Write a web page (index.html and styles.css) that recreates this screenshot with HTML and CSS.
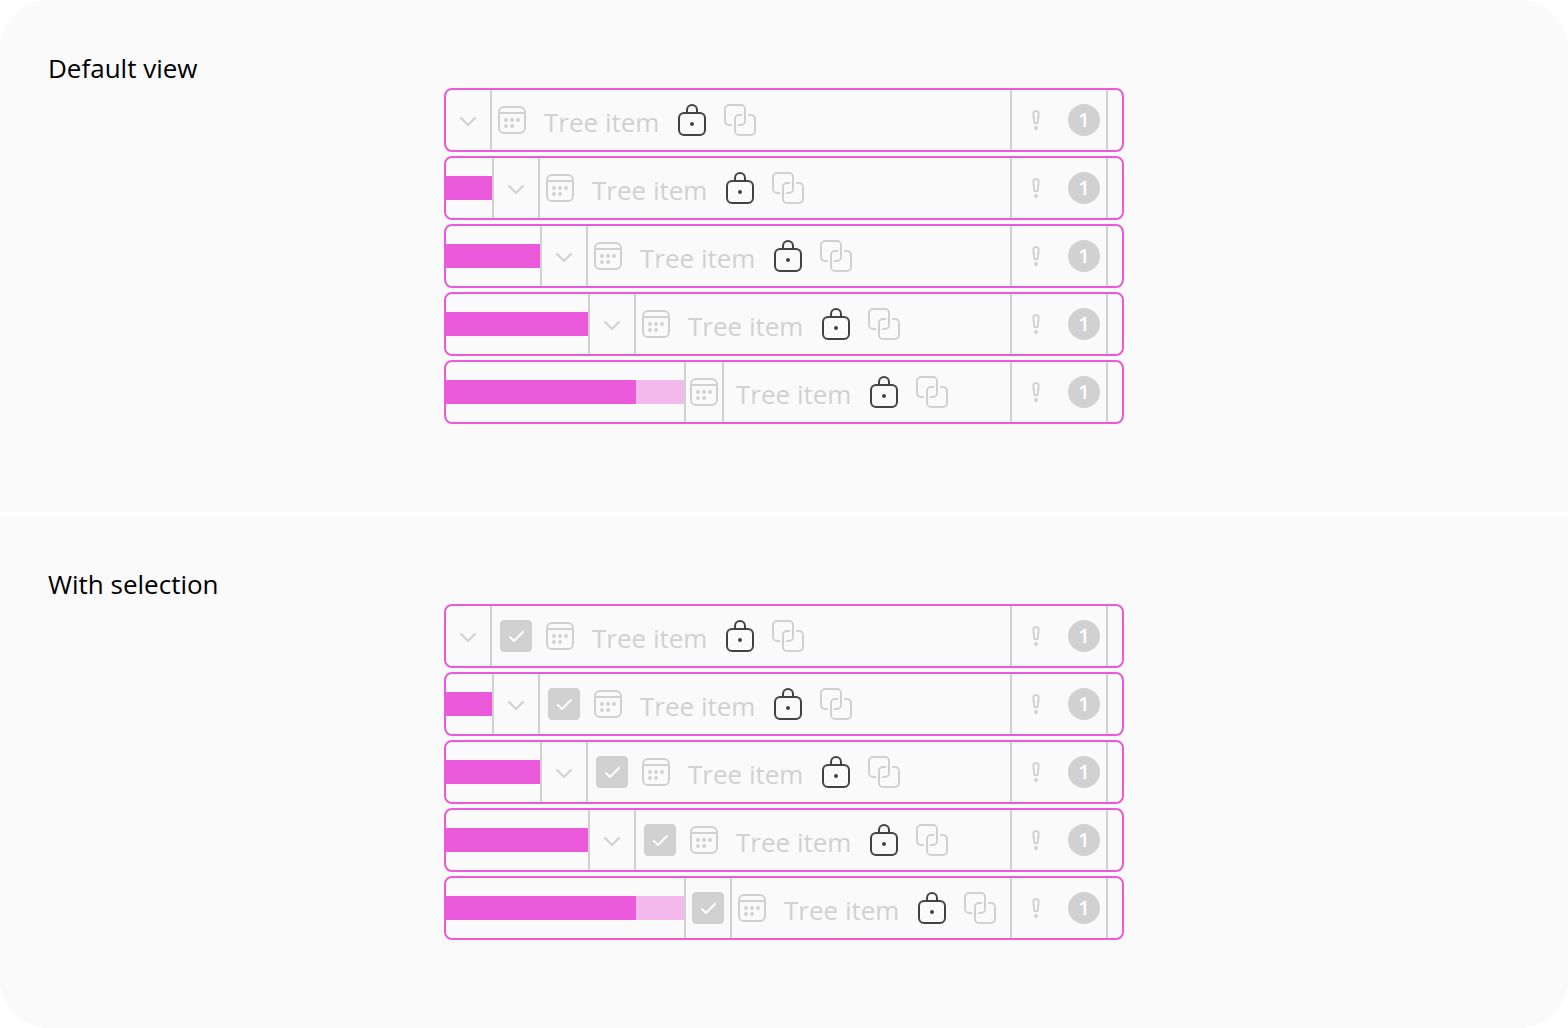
FILE: index.html
```html
<!DOCTYPE html>
<html lang="en">
<head>
<meta charset="utf-8">
<title>Tree item indentation</title>
<link rel="stylesheet" href="styles.css">
</head>
<body>
<svg class="sprite" aria-hidden="true">
  <symbol id="chevron" viewBox="0 0 32 32"><path d="M9 14l7 7 7-7"/></symbol>
  <symbol id="calendar" viewBox="0 0 32 32"><rect x="3" y="3" width="26" height="26" rx="5"/><path d="M3 9h26"/><g fill="currentColor" stroke="none"><circle cx="10" cy="16" r="2"/><circle cx="16" cy="16" r="2"/><circle cx="22" cy="16" r="2"/><circle cx="10" cy="22" r="2"/><circle cx="16" cy="22" r="2"/></g></symbol>
  <symbol id="lock" viewBox="0 0 32 32"><rect x="3" y="9" width="26" height="22" rx="5"/><path d="M11 9V6a5 5 0 0 1 10 0v3"/><circle cx="16" cy="20" r="2" fill="currentColor" stroke="none"/></symbol>
  <symbol id="linked" viewBox="0 0 32 32"><path d="M8 21H5a4 4 0 0 1-4-4V5a4 4 0 0 1 4-4h12a4 4 0 0 1 4 4v12a4 4 0 0 1-4 4h-3"/><path d="M18 11h-3a4 4 0 0 0-4 4v12a4 4 0 0 0 4 4h12a4 4 0 0 0 4-4V15a4 4 0 0 0-4-4h-3"/></symbol>
  <symbol id="important" viewBox="0 0 32 32"><path d="M16 7c-1.700 0-2.900 1.200-2.700 3l.9 7.800c.1 1 .8 1.700 1.800 1.700s1.700-.7 1.800-1.700l.9-7.800c.2-1.800-1-3-2.700-3z"/><circle cx="16" cy="24" r="2" fill="currentColor" stroke="none"/></symbol>
  <symbol id="check" viewBox="0 0 32 32"><path d="M10 17l4 4 9-9"/></symbol>
</svg>
<main class="page">
  <section class="panel">
    <h2 class="title">Default view</h2>
    <ul class="tree" id="default-tree"></ul>
  </section>
  <section class="panel">
    <h2 class="title">With selection</h2>
    <ul class="tree" id="selection-tree"></ul>
  </section>
</main>
<script src="tree.js"></script>
</body>
</html>
```
FILE: styles.css
```css
* {
  box-sizing: border-box;
}

body {
  margin: 0;
  background: #fff;
  color: #000;
  font-family: "Open Sans", "Noto Sans", sans-serif;
}

.sprite {
  display: none;
}

.page {
  display: grid;
  gap: 4px;
  border-radius: 48px;
  overflow: hidden;
}

.panel {
  padding: 48px 48px 88px;
  background: #fafafa;
}

.title {
  margin: 0;
  font-size: 26px;
  font-weight: 400;
  line-height: 40px;
}

.tree {
  display: grid;
  gap: 4px;
  max-width: 680px;
  margin: 0 auto;
  padding: 0;
  list-style: none;
}

.row {
  display: flex;
  height: 64px;
  border: 2px solid #ea5adb;
  border-radius: 8px;
  color: #d1d1d1;
}

.row > * {
  flex: none;
}

.indent {
  align-self: center;
  height: 24px;
  background: #ea5adb;
}

.level-1 { width: 46px; }
.level-2 { width: 94px; }
.level-3 { width: 142px; }
.level-4 { width: 190px; }

.spacer {
  align-self: center;
  width: 48px;
  height: 24px;
  background: #f3b9ec;
}

.cell {
  display: grid;
  place-items: center;
  width: 48px;
  padding: 0;
  border: 0 solid transparent;
  border-width: 0 2px;
  background: none;
  color: inherit;
}

.toggle,
.edge {
  border-color: #d1d1d1;
}

.toggle:first-child {
  width: 46px;
  border-left-width: 0;
}

.media {
  width: 40px;
}

.icon {
  display: block;
  width: 32px;
  height: 32px;
  fill: none;
  stroke: currentColor;
  stroke-width: 2;
  stroke-linecap: round;
  stroke-linejoin: round;
}

.linked {
  stroke-linecap: butt;
}

.content {
  display: flex;
  align-items: center;
  gap: 16px;
  margin-left: 12px;
}

.name {
  width: 116px;
  padding-top: 4px;
  font-size: 26px;
  line-height: 36px;
  white-space: nowrap;
}

.lock {
  color: #424242;
}

.aside {
  display: flex;
  align-items: center;
  gap: 16px;
  margin: 0 14px 0 auto;
  padding: 0 6px 0 8px;
  border: 0 solid #d1d1d1;
  border-width: 0 2px;
}

.badge {
  width: 32px;
  height: 32px;
  border-radius: 50%;
  background: #d1d1d1;
  color: #fff;
  font-size: 20px;
  font-weight: 600;
  line-height: 32px;
  text-align: center;
}

.check > * {
  grid-area: 1 / 1;
}

.box {
  appearance: none;
  width: 32px;
  height: 32px;
  margin: 0;
  border: 1px solid #d1d1d1;
  border-radius: 4px;
}

.box:checked {
  background: #d1d1d1;
}

.mark {
  color: #fff;
  pointer-events: none;
}
```
FILE: tree.js
```js
const icon = (name) =>
  `<svg class="icon ${name}" aria-hidden="true"><use href="#${name}"/></svg>`;

function row(level, selectable) {
  const leaf = level === 4;
  const indent = level ? `<span class="indent level-${level}"></span>` : "";
  const lead = leaf
    ? `<span class="spacer"></span>`
    : `<button class="cell toggle" type="button" aria-label="Collapse">${icon("chevron")}</button>`;
  const check = selectable
    ? `<label class="cell check ${leaf ? "edge" : ""}"><input class="box" type="checkbox" checked aria-label="Select tree item"><svg class="icon mark" aria-hidden="true"><use href="#check"/></svg></label>`
    : "";
  const media = `<span class="cell media ${leaf && !selectable ? "edge" : ""}">${icon("calendar")}</span>`;
  return `<li class="row">${indent}${lead}${check}${media}
    <span class="content"><span class="name">Tree item</span>${icon("lock")}${icon("linked")}</span>
    <span class="aside">${icon("important")}<span class="badge">1</span></span></li>`;
}

const levels = [0, 1, 2, 3, 4];
document.getElementById("default-tree").innerHTML = levels.map((l) => row(l, false)).join("");
document.getElementById("selection-tree").innerHTML = levels.map((l) => row(l, true)).join("");
```
